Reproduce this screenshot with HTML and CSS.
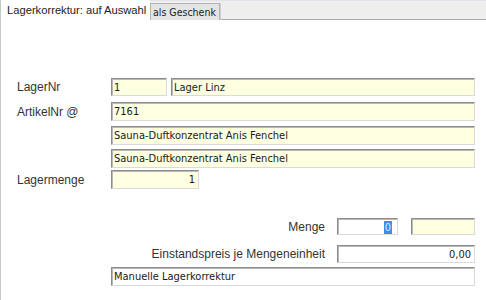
FILE: index.html
```html
<!DOCTYPE html>
<html lang="de">
<head>
    <meta charset="UTF-8">
    <title>Lagerkorrektur</title>
    <link rel="stylesheet" href="styles.css">
</head>
<body>
    <div class="tabs">
        <div class="tab active">Lagerkorrektur: auf Auswahl</div>
        <div class="tab">als Geschenk</div>
    </div>

    <div class="page">
        <div class="row r1">
            <div class="lbl">LagerNr</div>
            <div class="field w-nr">1</div>
            <div class="field grow">Lager Linz</div>
        </div>
        <div class="row r2">
            <div class="lbl">ArtikelNr @</div>
            <div class="field grow">7161</div>
        </div>
        <div class="row r3">
            <div class="lbl"></div>
            <div class="field grow">Sauna-Duftkonzentrat Anis Fenchel</div>
        </div>
        <div class="row r4">
            <div class="lbl"></div>
            <div class="field grow">Sauna-Duftkonzentrat Anis Fenchel</div>
        </div>
        <div class="row r5">
            <div class="lbl">Lagermenge</div>
            <div class="field num w-menge">1</div>
        </div>

        <div class="row r6">
            <div class="lbl"></div>
            <div class="sublbl">Menge</div>
            <div class="field num white w-m1"><span class="sel">0</span></div>
            <div class="field w-m2"></div>
        </div>
        <div class="row r7">
            <div class="lbl"></div>
            <div class="sublbl">Einstandspreis je Mengeneinheit</div>
            <div class="field num white grow">0,00</div>
        </div>
        <div class="row r8">
            <div class="lbl"></div>
            <div class="field white grow">Manuelle Lagerkorrektur</div>
        </div>
    </div>
</body>
</html>
```

FILE: styles.css
```css
body {
    margin: 0;
    width: 486px;
    height: 300px;
    overflow: hidden;
    background: #fff;
    font-family: "Liberation Sans", Arial, sans-serif;
    font-size: 12px;
    color: #333;
}
.tabs {
    display: flex;
    height: 20px;
    background: #eeeeee;
    border-top: 1px solid #dfe4ea;
    border-bottom: 1px solid #a9a9b1;
    box-sizing: border-box;
}
.tab {
    font-size: 11.2px;
    color: #222;
}
.tab.active {
    width: 150px;
    height: 20px;
    margin-top: -1px;
    padding: 4px 0 0 6px;
    box-sizing: border-box;
    background: #fff;
    border-left: 1px solid #c8c8c8;
}
.tab:not(.active) {
    width: 70px;
    height: 17px;
    margin-top: 2px;
    padding: 2px 0 0 2px;
    box-sizing: border-box;
    background: #e4e4e4;
    border: 1px solid #b4b4b4;
    border-bottom: none;
    box-shadow: 1px 0 0 #cfcfcf;
    font-family: "DejaVu Sans Condensed", "Liberation Sans", sans-serif;
    font-size: 10.5px;
}
.page {
    height: 280px;
    padding: 0 11px 0 16px;
    border-left: 1px solid #c8c8c8;
    box-sizing: border-box;
}
.row {
    display: flex;
    align-items: center;
    gap: 4px;
    height: 18px;
}
.r1 { padding-top: 58px; }
.r2 { margin-top: 6px; height: 19px; }
.r3 { margin-top: 5px; height: 19px; }
.r4 { margin-top: 4px; height: 19px; }
.r5 { margin-top: 2px; height: 19px; }
.r6 { margin-top: 29px; height: 17px; }
.r7 { margin-top: 10px; }
.r8 { margin-top: 4px; height: 19px; }
.lbl {
    width: 94px;
    flex: none;
    margin-right: -4px;
    color: #333;
}
.sublbl {
    width: 222px;
    flex: none;
    padding-right: 8px;
    box-sizing: border-box;
    text-align: right;
    color: #333;
}
.field {
    height: 100%;
    box-sizing: border-box;
    background: #ffffe1;
    border: 1px solid;
    border-color: #8c8c8c #dadada #dadada #8c8c8c;
    box-shadow: inset 1px 1px 0 #b8b8b8;
    padding: 1px 3px 0 2px;
    font-family: "DejaVu Sans Condensed", "Liberation Sans", sans-serif;
    font-size: 11px;
    line-height: 15px;
    color: #1a1a1a;
    white-space: nowrap;
}
.field.white { background: #fff; }
.field.num { text-align: right; }
.grow { flex: 1; }
.w-nr { width: 56px; flex: none; }
.w-menge { width: 88px; flex: none; }
.w-m1 { width: 61px; flex: none; margin-right: 9px; }
.w-m2 { width: 64px; flex: none; }
.sel {
    display: inline-block;
    background: #3d8ee8;
    color: #dbe9fb;
    padding: 0 1px;
    line-height: 13px;
    margin-right: 2px;
}
```
